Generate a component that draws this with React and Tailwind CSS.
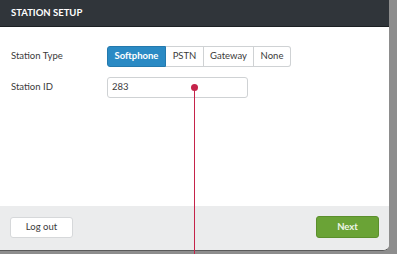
import React from 'react';

const types = [
  { label: 'Softphone', w: 'w-[59px]' },
  { label: 'PSTN', w: 'w-[38px]' },
  { label: 'Gateway', w: 'w-[50px]' },
  { label: 'None', w: 'w-[37px]' },
];

export default function App() {
  return (
    <div className="relative w-[397px] h-[254px] bg-[#8d8d8d] overflow-hidden" style={{ fontFamily: 'Lato, "Open Sans", sans-serif' }}>
      <div className="w-[389px] h-[251px] bg-white flex flex-col rounded-br-[6px] overflow-hidden border-b border-[#5a5a5a]">
        {/* Header */}
        <div className="h-[27px] bg-[#30353a] border-b border-[#1c2023] flex items-center px-[11px]">
          <span className="text-white text-[9.5px] font-bold">STATION SETUP</span>
        </div>

        {/* Body */}
        <div className="flex-1 flex flex-col pt-[19px] px-[11px] gap-[10px]">
          <div className="flex items-center">
            <span className="w-[96px] text-[9.5px] text-[#3a3a3a]">Station Type</span>
            <div className="flex h-[21px] text-[9.5px]">
              {types.map((t, i) => (
                <div
                  key={t.label}
                  className={
                    i === 0
                      ? `${t.w} flex items-center justify-center bg-[#2a8ac4] border border-[#2479ad] text-white font-bold rounded-l-[3px]`
                      : `${t.w} flex items-center justify-center border border-l-0 border-[#cfd2d4] text-[#3a3a3a] ${i === types.length - 1 ? 'rounded-r-[3px]' : ''}`
                  }
                >
                  {t.label}
                </div>
              ))}
            </div>
          </div>
          <div className="flex items-center">
            <span className="w-[96px] text-[9.5px] text-[#3a3a3a]">Station ID</span>
            <div className="w-[141px] h-[21px] border border-[#cfd2d4] rounded-[3px] flex items-center px-[4px] text-[9.5px] text-[#3a3a3a]">
              283
            </div>
          </div>
        </div>

        {/* Footer */}
        <div className="h-[44px] bg-[#ebeced] flex items-center justify-between px-[10px] pb-[2px]">
          <button className="w-[63px] h-[21px] bg-white border border-[#d6d8da] rounded-[3px] text-[9.5px] text-[#3a3a3a]">
            Log out
          </button>
          <button className="w-[63px] h-[22px] bg-[#6aa336] border border-[#5b8f2c] rounded-[3px] text-[9.5px] text-[#eef6e6] font-bold">
            Next
          </button>
        </div>
      </div>

      {/* Annotation marker */}
      <div className="absolute left-[191px] top-[84px] w-[7px] h-[7px] rounded-full bg-[#c5234a]" />
      <div className="absolute left-[194px] top-[87px] w-[1px] h-[170px] bg-[#c5234a]" />
    </div>
  );
}
